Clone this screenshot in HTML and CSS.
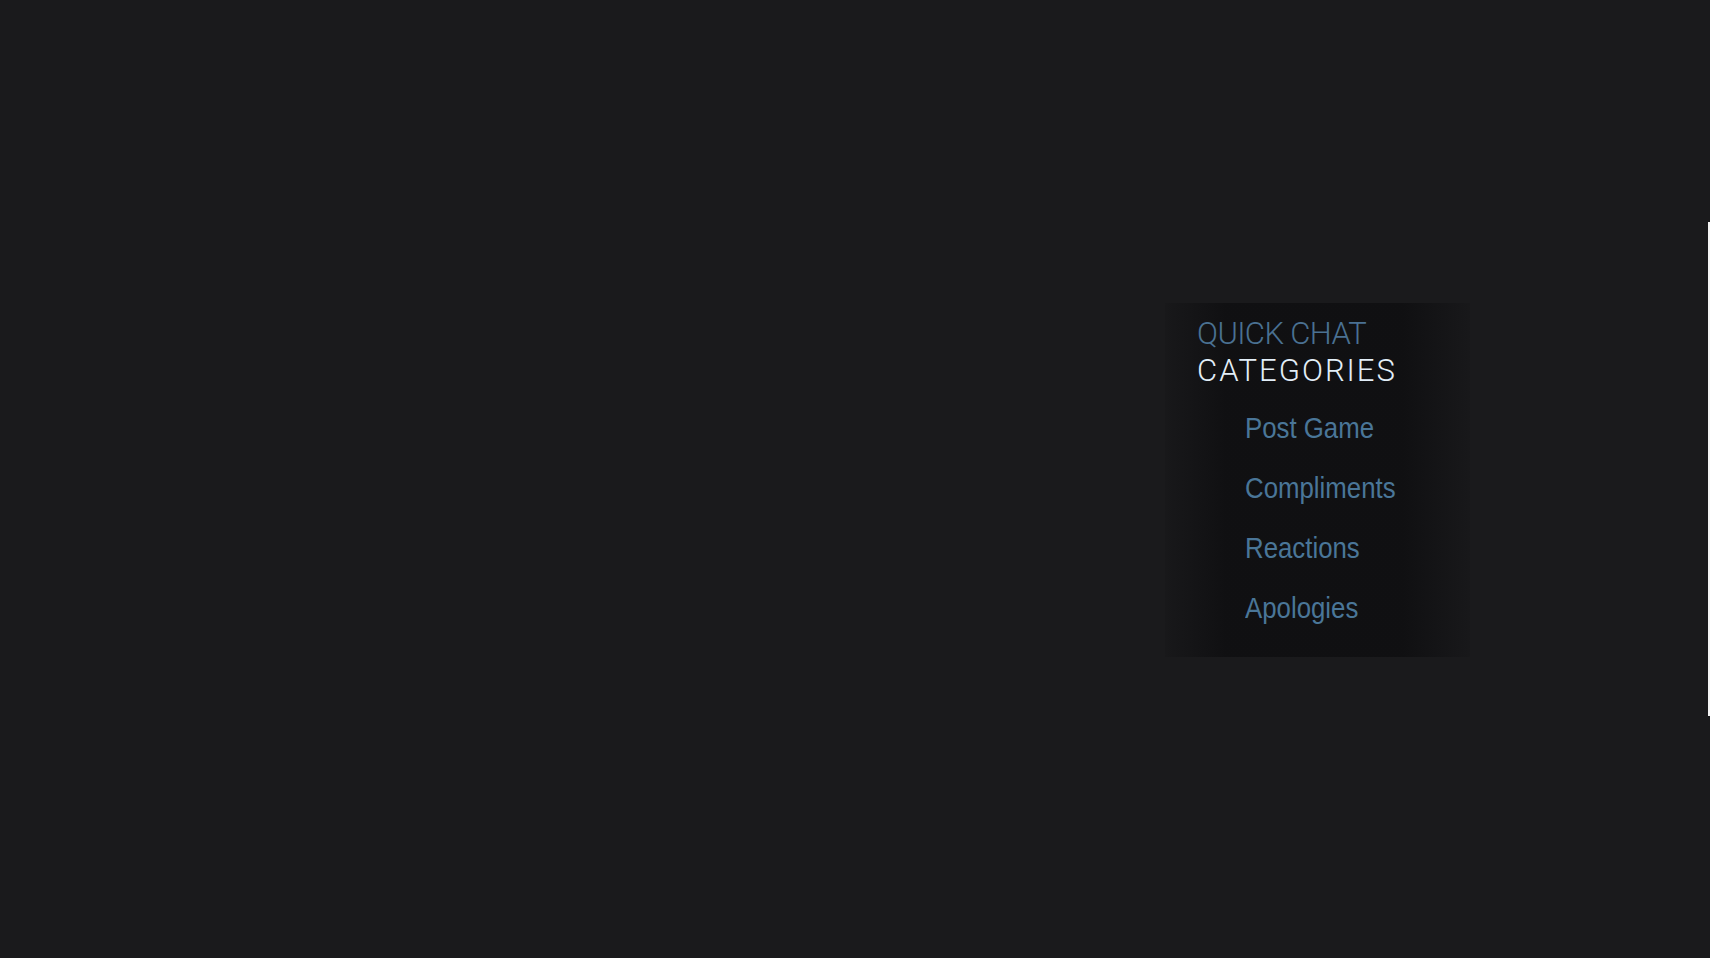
FILE: index.html
```html
<!DOCTYPE html>
<html lang="en">
<head>
<meta charset="utf-8">
<title>Quick Chat</title>
<link rel="stylesheet" href="styles.css">
</head>
<body>
<div class="screen">
  <section class="quickchat">
    <header class="qc-head">
      <div class="qc-title">QUICK CHAT</div>
      <div class="qc-sub">CATEGORIES</div>
    </header>
    <ul class="qc-list">
      <li class="qc-item">Post Game</li>
      <li class="qc-item">Compliments</li>
      <li class="qc-item">Reactions</li>
      <li class="qc-item">Apologies</li>
    </ul>
  </section>
  <div class="edge-bar"></div>
</div>
</body>
</html>
```

FILE: styles.css
```css
html, body {
  margin: 0;
  padding: 0;
  background: #1a1a1c;
  width: 100%;
  height: 100%;
  overflow: hidden;
}

.screen {
  display: flex;
  align-items: flex-start;
  height: 958px;
  padding-left: 1165px;
  box-sizing: border-box;
}

.quickchat {
  margin-top: 303px;
  width: 305px;
  height: 354px;
  box-sizing: border-box;
  padding: 12px 0 0 32px;
  background: linear-gradient(to right,
    rgba(8, 8, 10, 0.1) 0%,
    rgba(8, 8, 10, 0.55) 20%,
    rgba(8, 8, 10, 0.55) 78%,
    rgba(8, 8, 10, 0.1) 100%);
  display: flex;
  flex-direction: column;
}

.qc-head {
  font-family: Roboto, "Noto Sans", sans-serif;
  font-weight: 300;
  font-size: 31px;
  line-height: 37px;
}

.qc-title {
  color: #4a7192;
  letter-spacing: -0.6px;
}

.qc-sub {
  color: #e2eef8;
  letter-spacing: 2px;
}

.qc-list {
  list-style: none;
  margin: 9px 0 0 0;
  padding: 0 0 0 48px;
  display: flex;
  flex-direction: column;
}

.qc-item {
  font-family: "Liberation Sans", Arial, sans-serif;
  font-size: 30px;
  line-height: 60px;
  height: 60px;
  color: #4a7698;
  transform: scaleX(0.86);
  transform-origin: left center;
  white-space: nowrap;
}

.edge-bar {
  margin-top: 222px;
  margin-left: 238px;
  width: 2px;
  height: 494px;
  background: #f4f4f4;
}
```
